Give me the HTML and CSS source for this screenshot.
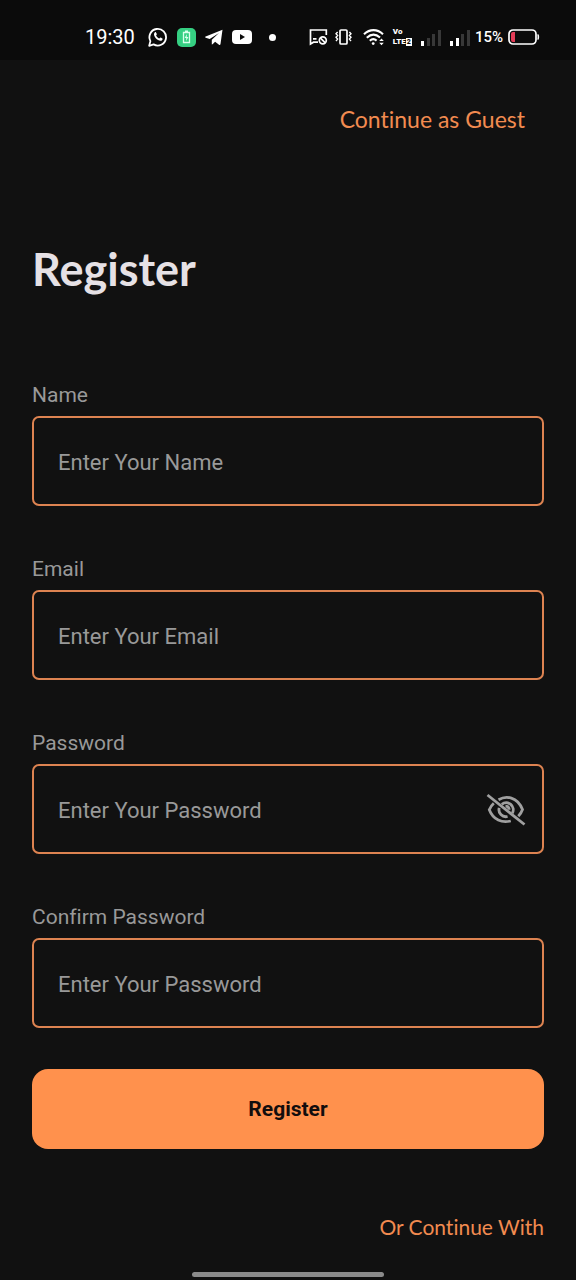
FILE: index.html
```html
<!DOCTYPE html>
<html lang="en">
<head>
<meta charset="utf-8">
<meta name="viewport" content="width=device-width, initial-scale=1">
<title>Register</title>
<link rel="stylesheet" href="styles.css">
</head>
<body>
<header class="status">
  <div class="status-group">
    <time class="clock">19:30</time>
    <svg class="after-clock" width="20" height="20" viewBox="0 0 20 20" fill="none" stroke="#fff" stroke-width="1.8" stroke-linejoin="round"><path d="M1.2 18.8l1.2-4.7a8.3 8.3 0 1 1 3.2 3.3z"/><path d="M6.7 5.4c.5-.5 1-.4 1.3.1l.8 1.6c.2.6-.6 1-.7 1.5.7 1.4 1.7 2.3 3.1 2.9.5-.1.9-1.1 1.5-.9l1.7.9c.6.4 0 1.6-.6 2-3 1.6-8.7-3.5-7.7-6.9z" fill="#fff" stroke="none"/></svg>
    <svg width="19" height="19" viewBox="0 0 19 19"><rect width="19" height="19" rx="5" fill="#35cf82"/><path d="M6.5 4.5h6v10h-6zM8 3.2h3" fill="none" stroke="#d9ffeb" stroke-width="1.3"/><path d="M10 6l-2.4 4h1.7L9 13l2.5-4H9.7z" fill="#d9ffeb"/></svg>
    <svg width="18" height="17" viewBox="0 0 18 17" fill="#fff"><path d="M17.5.7L.7 7.5c-.9.4-.8.9 0 1.2l4 1.3L14 4 6.8 10.7v4.7c.6 0 .9-.3 1.3-.7l2-1.9 3.9 2.9c.8.4 1.3.2 1.5-.7z"/></svg>
    <svg width="20" height="16" viewBox="0 0 20 16"><rect y="1" width="20" height="14" rx="4" fill="#fff"/><path d="M8 5l5 3-5 3z" fill="#0b0b0b"/></svg>
    <span class="dot"></span>
  </div>
  <div class="status-group status-right">
    <svg width="19" height="18" viewBox="0 0 19 18" fill="none" stroke="#fff" stroke-width="1.7"><path d="M9 14.2H4.5L1.5 16V2h15.8v5M4 10.8h3.5M4.5 5.3h.1"/><circle cx="13.8" cy="12.3" r="3.5"/><path d="M11.3 9.8l5 5"/></svg>
    <svg class="vibrate" width="17" height="18" viewBox="0 0 17 18" fill="none" stroke="#fff" stroke-width="1.7"><rect x="5" y="2" width="7" height="14" rx="1"/><path d="M2.6 4L1 5.8l1.6 1.8L1 9.3l1.6 1.8L1 13M14.4 4L16 5.8l-1.6 1.8L16 9.3l-1.6 1.8L16 13" stroke-width="1.4"/></svg>
    <svg class="wifi" width="22" height="18" viewBox="0 0 22 18" fill="none" stroke="#fff" stroke-width="2.1"><path d="M1 6.2c5.8-5.4 13.2-5.4 19 0M3.8 9.7c4.2-3.8 9.1-3.8 13.2-.2M6.8 12.8c2.2-2 4.7-2 6.8-.2"/><circle cx="10.2" cy="15.6" r="1.4" fill="#fff" stroke="none"/><path d="M16.2 13l2.3-2.6 2.3 2.6zM16.2 14.7l2.3 2.6 2.3-2.6z" fill="#fff" stroke="none"/></svg>
    <span class="volte"><span>Vo</span><span class="lte">LTE<b>2</b></span></span>
    <svg class="signal" width="20" height="17" viewBox="0 0 20 17"><path d="M0 12h3v5H0z" fill="#fff"/><path d="M6 9h3v8H6zM11 5h3v12h-3zM17 1h3v16h-3z" fill="#383838"/></svg>
    <svg class="signal" width="20" height="17" viewBox="0 0 20 17"><path d="M0 12h3v5H0zM6 9h3v8H6z" fill="#fff"/><path d="M11 5h3v12h-3zM17 1h3v16h-3z" fill="#383838"/></svg>
    <span class="percent">15%</span>
    <svg width="32" height="17" viewBox="0 0 32 17"><rect x="1" y="1" width="27" height="14" rx="4" fill="none" stroke="#fff" stroke-width="1.7"/><path d="M7 3v10H5a2 2 0 0 1-2-2V5a2 2 0 0 1 2-2z" fill="#e43c57"/><path d="M30 5.5q1.5 2.5 0 5z" fill="#fff" stroke="#fff"/></svg>
  </div>
</header>
<main class="page">
  <a class="guest" href="#guest">Continue as Guest</a>
  <h1 class="title">Register</h1>
  <form class="form">
    <div class="field">
      <label class="label" for="name">Name</label>
      <input class="input" id="name" type="text" placeholder="Enter Your Name">
    </div>
    <div class="field">
      <label class="label" for="email">Email</label>
      <input class="input" id="email" type="email" placeholder="Enter Your Email">
    </div>
    <div class="field">
      <label class="label" for="password">Password</label>
      <div class="input-wrap">
        <input class="input" id="password" type="password" placeholder="Enter Your Password">
        <button class="eye" type="button" aria-label="Show password">
          <svg width="40" height="34" viewBox="0 0 40 34" fill="none" stroke="#a0a0a0" stroke-width="2.8"><path d="M12.5 6.7C20 2.4 31.3 3.5 36.5 16.5c-1 2.8-2.5 5.1-4.2 6.8M7.8 10.2C5.8 12 4.3 14.2 3.3 16.7 7.3 27 16 30.2 24.8 28"/><path d="M15.8 11.3a7 7 0 0 1 10.5 8.9M13.2 14.8a7 7 0 0 0 8.4 8.7"/><path d="M19.5 13.2c2.2 0 3.6 1.4 3.6 3.6"/><path d="M1.5 2l37 29.5"/></svg>
        </button>
      </div>
    </div>
    <div class="field">
      <label class="label" for="confirm">Confirm Password</label>
      <input class="input" id="confirm" type="password" placeholder="Enter Your Password">
    </div>
    <button class="submit" type="submit">Register</button>
  </form>
  <a class="other" href="#other">Or Continue With</a>
</main>
<footer class="nav"><span class="handle"></span></footer>
</body>
</html>
```
FILE: styles.css
```css
* { box-sizing: border-box; }

body {
  margin: 0;
  min-height: 100vh;
  display: flex;
  flex-direction: column;
  background: #111;
  color: #999;
  font-family: Roboto, sans-serif;
  font-variant-ligatures: none;
}

.status {
  display: flex;
  align-items: center;
  justify-content: space-between;
  height: 60px;
  padding: 14px 36px 0 85px;
  background: #0b0b0b;
  color: #fff;
}

.status-group { display: flex; align-items: center; gap: 9px; }
.status-group svg { flex: none; }
.status-right { gap: 5px; }
.clock { font-size: 20px; line-height: 24px; }
.after-clock { margin-left: 4px; }
.dot { width: 7px; height: 7px; margin-left: 8px; border-radius: 50%; background: #fff; }
.vibrate { margin-left: 2px; }
.wifi { margin-left: 6px; }
.volte { display: flex; flex-direction: column; margin-left: 3px; font-size: 8px; font-weight: 900; line-height: 10px; }
.lte { display: flex; align-items: center; }
.lte b { padding: 0 1px; background: #fff; color: #0b0b0b; font-size: 7px; line-height: 8px; }
.signal { margin-left: 4px; }
.percent { font-size: 15px; font-weight: 500; line-height: 24px; }

.page {
  flex: 1;
  display: flex;
  flex-direction: column;
  padding: 44px 32px 16px;
}

.guest, .other {
  align-self: flex-end;
  color: #f28b50;
  font-family: Lato, sans-serif;
  text-decoration: none;
}

.guest { margin-right: 19px; font-size: 23px; line-height: 30px; }

.title {
  margin: 107px 0 0;
  color: #e6e1e5;
  font-family: Lato, sans-serif;
  font-size: 45px;
  font-weight: 700;
  line-height: 56px;
}

.form { display: flex; flex-direction: column; gap: 51px; margin-top: 86px; }
.field { display: flex; flex-direction: column; gap: 9px; }
.label { font-size: 21px; line-height: 24px; }
.input-wrap { position: relative; }

.input {
  display: block;
  width: 100%;
  height: 90px;
  padding: 2px 24px 0;
  border: 2px solid #dd8351;
  border-radius: 7px;
  outline: none;
  background: transparent;
  color: #e6e1e5;
  font-family: inherit;
  font-size: 22px;
}

.input::placeholder { color: #999; opacity: 1; }
.input-wrap .input { padding-right: 72px; }

.eye {
  position: absolute;
  inset: 2px 18px 0 auto;
  display: flex;
  align-items: center;
  padding: 0;
  border: 0;
  background: none;
}

.submit {
  height: 80px;
  margin-top: -10px;
  border: 0;
  border-radius: 16px;
  background: #ff914d;
  color: #120d0d;
  font-family: inherit;
  font-size: 21px;
  font-weight: 700;
}

.other { margin-top: 64px; font-size: 21px; line-height: 28px; }

.nav { display: flex; justify-content: center; padding-bottom: 3px; }
.handle { width: 192px; height: 5px; border-radius: 3px; background: #8b8b8b; }
```
